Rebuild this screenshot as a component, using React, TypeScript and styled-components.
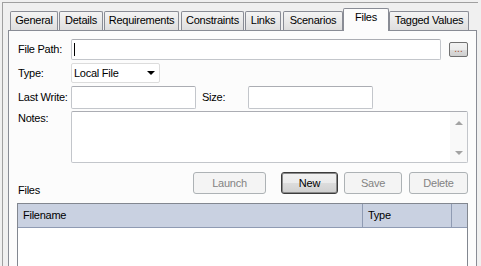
import React from "react";
import styled, { createGlobalStyle, css } from "styled-components";

const GlobalStyle = createGlobalStyle`
  html, body { margin: 0; padding: 0; background: #f0f0f0; overflow: hidden; }
  body {
    font-family: "Liberation Sans", Arial, sans-serif;
    font-size: 11px;
    letter-spacing: -0.25px;
    color: #000;
  }
  * { box-sizing: border-box; }
`;

const Frame = styled.div`
  margin: 2px 0 0 2px;
  width: 476px;
  height: 264px;
  overflow: hidden;
  border-top: 1px solid #a0a0a0;
  border-left: 1px solid #a0a0a0;
  padding: 5px 1px 0 5px;
`;

const TabRow = styled.div`
  display: flex;
  align-items: flex-end;
  height: 22px;
  padding-left: 2px;
`;

const Tab = styled.div<{ $w: number; $ml: number; $active?: boolean }>`
  width: ${(p) => p.$w}px;
  margin-left: ${(p) => p.$ml}px;
  flex: none;
  text-align: center;
  line-height: 13px;
  white-space: nowrap;
  border: 1px solid #898c95;
  border-bottom: none;
  border-radius: 2px 2px 0 0;
  ${(p) =>
    p.$active
      ? css`
          height: 23px;
          margin-bottom: -1px;
          padding-top: 2px;
          background: #fcfcfc;
          position: relative;
          z-index: 1;
        `
      : css`
          height: 19px;
          padding-top: 2px;
          background: linear-gradient(#f4f4f4, #e9e9e9 50%, #dedede);
        `}
`;

const Panel = styled.div`
  border: 1px solid #898c95;
  border-bottom: none;
  background: #fcfcfc;
  height: 236px;
  padding: 8px 8px 0 8px;
`;

const Row = styled.div<{ $h: number; $mt: number }>`
  display: flex;
  align-items: center;
  height: ${(p) => p.$h}px;
  margin-top: ${(p) => p.$mt}px;
`;

const Label = styled.div<{ $w?: number; $ml?: number; $top?: boolean }>`
  width: ${(p) => p.$w ?? 54}px;
  margin-left: ${(p) => p.$ml ?? 0}px;
  flex: none;
  padding-left: 1px;
  line-height: 13px;
  ${(p) =>
    p.$top &&
    css`
      align-self: flex-start;
      padding-top: 1px;
    `}
`;

const TextBox = styled.div<{ $w?: number }>`
  height: 100%;
  ${(p) => (p.$w ? `width: ${p.$w}px; flex: none;` : "flex: 1;")}
  background: #fff;
  border: 1px solid #c3c6cb;
  border-top-color: #abadb3;
  border-radius: 2px;
  display: flex;
  align-items: center;
  padding-left: 2px;
`;

const Caret = styled.span`
  display: block;
  width: 1px;
  height: 13px;
  background: #000;
`;

const BrowseButton = styled.div`
  width: 19px;
  height: 15px;
  margin-left: 8px;
  flex: none;
  align-self: flex-start;
  margin-top: 3px;
  border: 1px solid #707070;
  border-radius: 2px;
  background: linear-gradient(#f2f2f2, #ebebeb 50%, #dddddd 50%, #cfcfcf);
  font-size: 10px;
  line-height: 11px;
  text-align: center;
  color: #a0522d;
  letter-spacing: 0;
`;

const Select = styled.div`
  width: 89px;
  height: 100%;
  flex: none;
  background: #fff;
  border: 1px solid #dcdcdc;
  border-radius: 2px;
  display: flex;
  align-items: center;
  justify-content: space-between;
  padding: 0 4px 0 2px;
`;

const DropArrow = styled.span`
  width: 0;
  height: 0;
  border-left: 4px solid transparent;
  border-right: 4px solid transparent;
  border-top: 4px solid #000;
`;

const NotesBox = styled.div`
  flex: 1;
  height: 100%;
  background: #fff;
  border: 1px solid #c3c6cb;
  border-top-color: #abadb3;
  border-radius: 2px;
  display: flex;
  justify-content: flex-end;
`;

const ScrollBar = styled.div`
  width: 17px;
  height: 100%;
  background: #f9f9f9;
  display: flex;
  flex-direction: column;
  align-items: center;
  justify-content: space-between;
  padding: 9px 0 7px;
`;

const Arrow = styled.span<{ $dir: "up" | "down" }>`
  width: 0;
  height: 0;
  border-left: 4px solid transparent;
  border-right: 4px solid transparent;
  ${(p) =>
    p.$dir === "up"
      ? "border-bottom: 4px solid #a3a3a3;"
      : "border-top: 4px solid #a3a3a3;"}
`;

const ActionRow = styled.div`
  display: flex;
  height: 25px;
  margin-top: 9px;
`;

const SectionLabel = styled.div`
  align-self: flex-end;
  line-height: 13px;
  padding-left: 1px;
`;

const ButtonGroup = styled.div`
  margin-left: auto;
  display: flex;
  align-self: flex-start;
`;

const Button = styled.div<{ $w: number; $ml: number; $disabled?: boolean }>`
  width: ${(p) => p.$w}px;
  margin-left: ${(p) => p.$ml}px;
  height: 22px;
  border-radius: 3px;
  text-align: center;
  line-height: 20px;
  ${(p) =>
    p.$disabled
      ? css`
          border: 1px solid #adb2b5;
          background: #f4f4f4;
          color: #838383;
        `
      : css`
          border: 1px solid #3c3c3c;
          box-shadow: inset 0 0 0 1px #8a8a8a;
          background: linear-gradient(#f2f2f2, #ebebeb 50%, #dddddd 50%, #cfcfcf);
          color: #000;
        `}
`;

const ListBox = styled.div`
  margin-top: 6px;
  border: 1px solid #828790;
  border-bottom: none;
  background: #fff;
  height: 63px;
`;

const ListHeader = styled.div`
  display: flex;
  height: 24px;
  background: #c9d1e1;
  border-bottom: 1px solid #8f9bb3;
`;

const HeaderCell = styled.div<{ $w?: number }>`
  ${(p) => (p.$w ? `width: ${p.$w}px; flex: none; border-right: 1px solid #8f9bb3;` : "flex: 1;")}
  padding-left: 5px;
  line-height: 23px;
`;

const tabs = [
  { label: "General", w: 48, ml: 0 },
  { label: "Details", w: 44, ml: 1 },
  { label: "Requirements", w: 75, ml: 1 },
  { label: "Constraints", w: 63, ml: 2 },
  { label: "Links", w: 36, ml: 1 },
  { label: "Scenarios", w: 60, ml: 2 },
  { label: "Files", w: 46, ml: 0, active: true },
  { label: "Tagged Values", w: 80, ml: 0 },
];

export default function App() {
  return (
    <>
      <GlobalStyle />
      <Frame>
        <TabRow>
          {tabs.map((t) => (
            <Tab key={t.label} $w={t.w} $ml={t.ml} $active={t.active}>
              {t.label}
            </Tab>
          ))}
        </TabRow>
        <Panel>
          <Row $h={21} $mt={0}>
            <Label>File Path:</Label>
            <TextBox>
              <Caret />
            </TextBox>
            <BrowseButton>...</BrowseButton>
          </Row>
          <Row $h={20} $mt={3}>
            <Label>Type:</Label>
            <Select>
              <span>Local File</span>
              <DropArrow />
            </Select>
          </Row>
          <Row $h={23} $mt={3}>
            <Label>Last Write:</Label>
            <TextBox $w={125} />
            <Label $w={47} $ml={5}>Size:</Label>
            <TextBox $w={125} />
          </Row>
          <Row $h={52} $mt={2}>
            <Label $top>Notes:</Label>
            <NotesBox>
              <ScrollBar>
                <Arrow $dir="up" />
                <Arrow $dir="down" />
              </ScrollBar>
            </NotesBox>
          </Row>
          <ActionRow>
            <SectionLabel>Files</SectionLabel>
            <ButtonGroup>
              <Button $w={73} $ml={0} $disabled>Launch</Button>
              <Button $w={57} $ml={15}>New</Button>
              <Button $w={58} $ml={6} $disabled>Save</Button>
              <Button $w={59} $ml={7} $disabled>Delete</Button>
            </ButtonGroup>
          </ActionRow>
          <ListBox>
            <ListHeader>
              <HeaderCell $w={345}>Filename</HeaderCell>
              <HeaderCell $w={89}>Type</HeaderCell>
              <HeaderCell />
            </ListHeader>
          </ListBox>
        </Panel>
      </Frame>
    </>
  );
}
